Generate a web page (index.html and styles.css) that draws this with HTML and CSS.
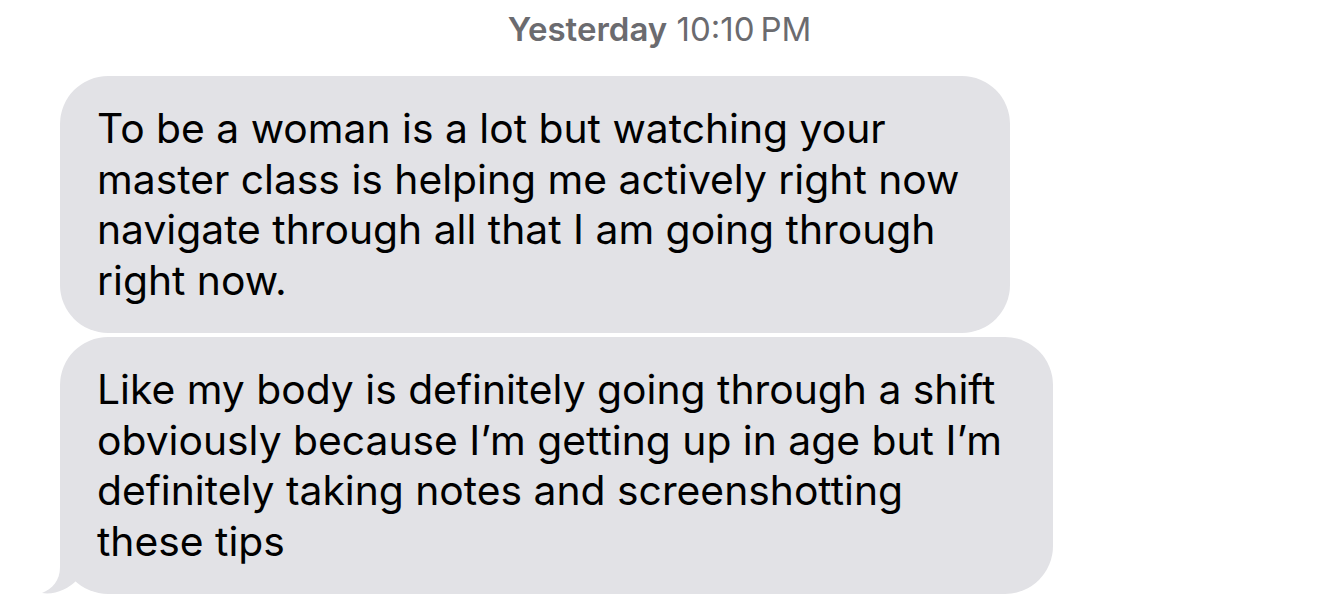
FILE: index.html
```html
<!DOCTYPE html>
<html lang="en">
<head>
    <meta charset="UTF-8">
    <meta name="viewport" content="width=device-width, initial-scale=1.0">
    <title>Messages</title>
    <link rel="stylesheet" href="styles.css">
</head>
<body>
    <div class="thread">
        <p class="timestamp"><span class="day">Yesterday</span> 10:10&#8239;PM</p>

        <div class="bubble">
            To be a woman is a lot but watching your<br>
            master class is helping me actively right now<br>
            navigate through all that I am going through<br>
            right now.
        </div>

        <div class="bubble last">
            Like my body is definitely going through a shift<br>
            obviously because I’m getting up in age but I’m<br>
            definitely taking notes and screenshotting<br>
            these tips
            <!-- tail on the last bubble of the group -->
            <svg class="tail" width="60" height="55" viewBox="0 0 60 55">
                <path d="M20 0 L20 28 C20 42 12 50 2 54 C15 56 28 50 36 42 L60 20 L60 0 Z" fill="#e2e2e6"/>
            </svg>
        </div>
    </div>
</body>
</html>
```

FILE: styles.css
```css
body {
    margin: 0;
    padding: 0;
    background-color: #fff;
    font-family: Inter, "Noto Sans", sans-serif;
}

.thread {
    display: flex;
    flex-direction: column;
    align-items: flex-start;
    gap: 4px;
    padding: 9px 0 0 60px;
}

.timestamp {
    align-self: stretch;
    margin: 0 0 23px -60px;
    text-align: center;
    font-size: 33px;
    line-height: 40px;
    color: #6b6b6f;
}

.day {
    font-weight: 600;
}

.bubble {
    position: relative;
    padding: 27px 51px 27px 37px;
    background-color: #e2e2e6;
    border-radius: 48px;
    color: #000;
    font-size: 40.8px;
    line-height: 50.7px;
}

.tail {
    position: absolute;
    left: -20px;
    bottom: 0;
    z-index: -1;
}

.last {
    z-index: 0;
}
```
